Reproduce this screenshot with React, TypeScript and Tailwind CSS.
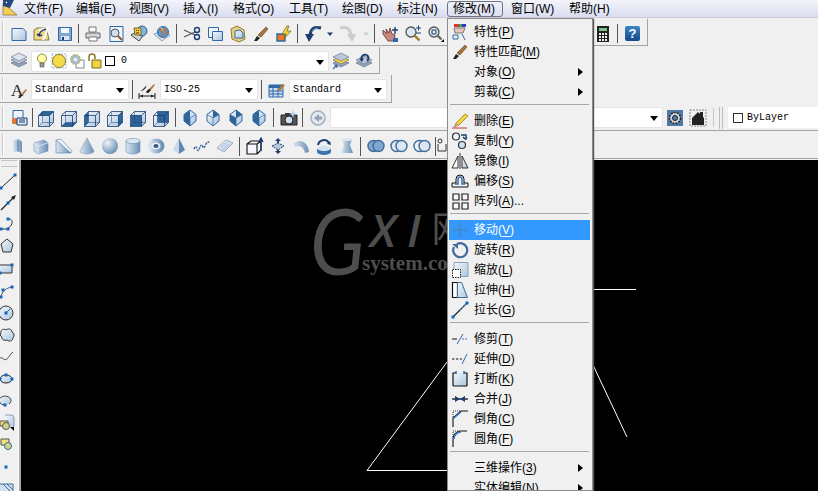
import React from "react";

const cjk = { fontFamily: '"Liberation Sans","Noto Sans CJK SC",sans-serif' };

function S({ children, w = 18, h = 18 }: { children?: React.ReactNode; w?: number; h?: number }) {
  return (
    <svg width={w} height={h} viewBox={`0 0 ${w} ${h}`} fill="none" className="shrink-0">
      {children}
    </svg>
  );
}

const B = "#2f69a8";
const D = "#1d3c70";
const L = "url(#lb)";

function Defs() {
  return (
    <svg className="absolute w-0 h-0">
      <defs>
        <linearGradient id="lb" x1="0" y1="0" x2="1" y2="1">
          <stop offset="0" stopColor="#f4f8fc" />
          <stop offset="1" stopColor="#a9c5de" />
        </linearGradient>
        <linearGradient id="sb" x1="0" y1="0" x2="1" y2="0">
          <stop offset="0" stopColor="#dbe7f2" />
          <stop offset="1" stopColor="#6c8fb3" />
        </linearGradient>
        <radialGradient id="sp" cx="0.35" cy="0.3" r="0.8">
          <stop offset="0" stopColor="#eef4fa" />
          <stop offset="1" stopColor="#5f86ae" />
        </radialGradient>
      </defs>
    </svg>
  );
}

const New = () => (
  <S>
    <path d="M2 3.5h11l3 3v9H2z" fill={L} stroke={B} />
  </S>
);
const Open = () => (
  <S>
    <path d="M1 15V5l3-2h10v3l2 9z" fill="#f0d98a" stroke="#8b7a3a" />
    <path d="M6 5l9-2-3 8-2 4" stroke="#fff" strokeWidth="2" />
    <path d="M13 4c-4 1-7 4-7 7m0 0l-2-2m2 2l3-1" stroke={D} strokeWidth="1.6" />
  </S>
);
const Save = () => (
  <S>
    <path d="M2.5 2.5h13v13h-13z" fill="#7ea6cf" stroke={B} />
    <path d="M5 3h8v5H5z" fill="#f4f8fc" />
    <path d="M5 11h8v4H5z" fill="#dbe7f2" />
    <path d="M6 12h2v3H6z" fill={D} />
  </S>
);
const Print = () => (
  <S>
    <path d="M5 2h7v5H5z" fill="#fff" stroke="#777" />
    <path d="M2 8h14v5H2z" fill="#d4d4dc" stroke="#666" />
    <path d="M5 12h8v4H5z" fill="#fff" stroke="#777" />
  </S>
);
const Preview = () => (
  <S>
    <path d="M3 1.5h13v15H3z" fill="#eef4fa" stroke={B} />
    <circle cx="8" cy="8" r="4" fill="#cfe0f0" stroke="#555" />
    <path d="M11 11l4 4" stroke="#8a5a2a" strokeWidth="2" />
  </S>
);
const Plot3d = () => (
  <S>
    <path d="M1 10l5-3 7 4-4 5z" fill="#cfd3dc" stroke="#444" />
    <circle cx="12" cy="6" r="5" fill="#7fb4e0" stroke="#3a5f8a" />
    <path d="M4 3h7v7H5z" fill="#f2c641" stroke="#7a6a20" />
    <path d="M6 5l1 1M9 5l-1 1M6 8h3" stroke="#333" />
  </S>
);
const Publish = () => (
  <S>
    <path d="M1 9l8-3 8 4-8 6z" fill="#dde6f0" stroke="#8aa0b8" />
    <circle cx="10" cy="7" r="5.5" fill="#4f9bd8" stroke="#2f69a8" />
    <path d="M6 4c3 0 4 3 3 8M13 3c-2 3-1 5 2 5" stroke="#e0662a" strokeWidth="1.5" />
    <path d="M8 2l2 4" stroke="#f2c641" />
  </S>
);
const Cut = () => (
  <S>
    <path d="M1 5l11 5M1 12l11-5" stroke="#555" strokeWidth="1.3" />
    <circle cx="14" cy="5" r="2.5" stroke={D} strokeWidth="1.4" />
    <circle cx="14" cy="12" r="2.5" stroke={D} strokeWidth="1.4" />
  </S>
);
const Copy = () => (
  <S>
    <path d="M2.5 2.5h10v10h-10z" fill="#eef4fa" stroke={B} />
    <path d="M6.5 6.5h10v9h-10z" fill={L} stroke={B} />
  </S>
);
const Paste = () => (
  <S>
    <path d="M2 4l6-3 7 4 1 9-6 3-7-3z" fill="#e8cf7a" stroke="#8b7a3a" />
    <path d="M6 6l5-1 3 3v5H6z" fill={L} stroke={B} />
  </S>
);
const Brush = () => (
  <S>
    <path d="M2 16l3-5 3 2-3 3z" fill="#222" />
    <path d="M6 10l8-8 2 2-7 8z" fill="#a8743a" stroke="#5a3c1c" strokeWidth=".6" />
  </S>
);
const Block = () => (
  <S>
    <path d="M2 9h8v7H2z" fill="#e8752a" stroke={B} strokeWidth="1.4" />
    <path d="M12 1L7 9h4l-2 5 7-8h-4l2-5z" fill="#f2d33c" stroke="#6a5a1a" strokeWidth=".7" />
  </S>
);
const Undo = ({ c = D }: { c?: string }) => (
  <S>
    <path d="M17 3C10 1 7 4 6 10" stroke={c} strokeWidth="3" />
    <path d="M1 9l9 0-5 8z" fill={c} />
    <path d="M14 3c-3 0-5 1-6 4" stroke="#6f9ac6" strokeWidth="1" />
  </S>
);
const Redo = () => (
  <S>
    <path d="M1 3c7-2 10 1 11 7" stroke="#c9cdd2" strokeWidth="3" />
    <path d="M17 9l-9 0 5 8z" fill="#c9cdd2" />
  </S>
);
const Caret = ({ c = "#1d3c70" }: { c?: string }) => (
  <S w={12} h={6}>
    <path d="M3 1.5h6L6 5z" fill={c} />
  </S>
);
const Pan = () => (
  <S>
    <path d="M2 5l4 4-1-5 3 4 1-5 2 6 3 1-1 6H7L2 9z" fill="#c58a84" stroke="#7a4a48" />
    <path d="M12 13h5v4h-5z" fill={B} />
    <path d="M14 2v7M11 5h6" stroke={D} strokeWidth="1.4" />
  </S>
);
const ZoomRt = () => (
  <S>
    <circle cx="7" cy="7" r="5" fill="#dbe7f2" stroke="#555" strokeWidth="1.3" />
    <path d="M10.5 10.5l5 5" stroke="#a07a2a" strokeWidth="2.4" />
    <path d="M12 3h5M14.5 .5v5M12 8h5" stroke={D} />
  </S>
);
const ZoomW = () => (
  <S>
    <circle cx="7" cy="7" r="5" fill="#dbe7f2" stroke="#555" strokeWidth="1.3" />
    <path d="M5 5h4v4H5z" stroke={D} />
    <path d="M10.5 10.5l4 4" stroke="#666" strokeWidth="2.4" />
    <path d="M17 14v3h-3z" fill="#000" />
  </S>
);
const Calc = () => (
  <S>
    <path d="M3 1h12v16H3z" fill="#222" />
    <path d="M5 3h8v3H5z" fill="#7fc08a" />
    <path d="M5 8h2v2H5zM8 8h2v2H8zM11 8h2v2h-2zM5 11h2v2H5zM8 11h2v2H8zM11 11h2v2h-2zM5 14h2v2H5zM8 14h2v2H8zM11 14h2v2h-2z" fill="#eee" />
  </S>
);
const Help = () => (
  <div className="w-[15px] h-[15px] rounded-[2px] bg-linear-to-b from-[#3f86c6] to-[#0f4a8a] flex items-center justify-center text-white text-[13px] font-bold" style={cjk}>
    ?
  </div>
);

const LayerStack = ({ accent }: { accent?: boolean }) => (
  <S>
    <path d="M1 11l8-4 8 4-8 4z" fill="#8fa4ba" stroke="#667" strokeWidth=".6" />
    <path d="M1 8l8-4 8 4-8 4z" fill={accent ? "#f2d33c" : "#b9c8d8"} stroke="#667" strokeWidth=".6" />
    <path d="M1 5l8-4 8 4-8 4z" fill={accent ? "#b9c8d8" : "#dde6f0"} stroke="#667" strokeWidth=".6" />
    {accent && <path d="M1 17l4-4m0 0H2m3 0v3" stroke={B} strokeWidth="1.1" />}
  </S>
);
const LayerBack = () => (
  <S>
    <path d="M1 11l8-4 8 4-8 4z" fill="#8fa4ba" stroke="#667" strokeWidth=".6" />
    <path d="M1 8l8-4 8 4-8 4z" fill="#b9c8d8" stroke="#667" strokeWidth=".6" />
    <path d="M7 8a3.5 3.5 0 1 1 5 1" stroke={D} strokeWidth="2" />
    <path d="M4 7l5-1-2 4z" fill={D} />
  </S>
);
const Bulb = () => (
  <S w={14} h={16}>
    <circle cx="7" cy="5.5" r="4.5" fill="#ffffa8" stroke="#8a8a30" />
    <path d="M5 10h4v4H5z" fill="#999" stroke="#555" strokeWidth=".6" />
  </S>
);
const Sun = () => (
  <S w={16} h={16}>
    <rect x="1" y="1" width="14" height="14" stroke="#9fb8d0" strokeDasharray="2 1" />
    <circle cx="8" cy="8" r="6.5" fill="#f5dc4a" stroke="#8a7a20" />
  </S>
);
const Freeze = () => (
  <S w={16} h={16}>
    <rect x="7" y="7" width="8" height="8" fill="#fff" stroke="#7a8a9a" />
    <circle cx="6.5" cy="6.5" r="5" fill="#a5bccf" stroke="#d0b040" strokeDasharray="2 1" />
    <circle cx="6.5" cy="6.5" r="2" fill="#e8eef4" />
  </S>
);
const Lock = () => (
  <S w={16} h={16}>
    <path d="M2 8V4a3 3 0 0 1 6 0v2" stroke="#8a7a20" strokeWidth="1.5" />
    <path d="M5 7h9v8H5z" fill="#f2d33c" stroke="#7a6a20" />
  </S>
);
const Square = () => <div className="w-[10px] h-[10px] border border-black bg-white" />;

const TextStyle = () => (
  <S>
    <text x="1" y="15" fontSize="17" fontFamily="Liberation Serif" fill="#222">A</text>
    <path d="M8 17l3-4 2 1-3 3z" fill="#222" />
    <path d="M11 13l5-5 1 1-4 5z" fill="#b27a3c" />
  </S>
);
const DimStyle = () => (
  <S w={18} h={18}>
    <path d="M1 15h16M1 12v6M17 12v6" stroke="#222" />
    <path d="M2 15l3-1.5v3zM16 15l-3-1.5v3z" fill="#222" />
    <path d="M3 10c3-1 5-3 5-5M8 11l3-3 2 1-3 3z" fill="#222" stroke="#222" strokeWidth=".5" />
    <path d="M11 8l5-5 1 1-4 5z" fill="#b27a3c" />
  </S>
);
const TableStyle = () => (
  <S>
    <path d="M1 4h14v12H1z" fill="#cfe0f0" stroke={B} />
    <path d="M1 4h14v3H1z" fill={B} />
    <path d="M1 10h14M1 13h14M5 7v9M10 7v9" stroke={B} />
    <path d="M9 9l6-6 2 1-5 6z" fill="#b27a3c" />
  </S>
);

const PageSetup = () => (
  <S>
    <path d="M3 1.5h10v13H3z" fill="#eef4fa" stroke={B} />
    <circle cx="5" cy="12" r="3" fill="#e8752a" />
    <path d="M7 9h10v7H7z" fill="#dbe7f2" stroke={D} />
    <path d="M9 11h6M9 13h6" stroke={D} />
  </S>
);

function Cube({ face }: { face: "top" | "bottom" | "left" | "right" | "front" | "back" }) {
  const dark = "#2f6499";
  return (
    <S>
      <path d="M1.5 6.5l4-4h11v11l-4 4h-11z" fill={L} stroke={D} strokeWidth=".8" />
      {face === "top" && <path d="M1.5 6.5l4-4h11l-4 4z" fill={dark} />}
      {face === "bottom" && <path d="M1.5 17.5l4-4h11l-4 4z" fill={dark} />}
      {face === "left" && <path d="M1.5 6.5l4-4v11l-4 4z" fill={dark} />}
      {face === "right" && <path d="M12.5 6.5l4-4v11l-4 4z" fill={dark} />}
      {face === "front" && <path d="M1.5 6.5h11v11h-11z" fill={dark} />}
      {face === "back" && <path d="M5.5 2.5h11v11h-11z" fill={dark} />}
      <path d="M1.5 6.5h11v11M12.5 6.5l4-4" stroke={D} strokeWidth=".8" />
      <path d="M5.5 2.5v11h11M5.5 13.5l-4 4" stroke={D} strokeWidth=".5" />
    </S>
  );
}
function Iso({ k }: { k: number }) {
  const dark = "#2f6499";
  const faces = ["M9 9L3 5.5V12l6 5z", "M9 9l6-3.5V12l-6 5z", "M9 9L3 5.5 9 1z", "M9 9l6-3.5L9 1z"];
  const sel = [[2, 0], [3], [0, 3], [0, 2]][k];
  return (
    <S>
      <path d="M9 1l6 4.5V12l-6 5-6-5V5.5z" fill={L} stroke={B} />
      {sel.map((i) => (
        <path key={i} d={faces[i]} fill={dark} />
      ))}
      <path d="M3 5.5L9 9l6-3.5M9 9v8" stroke={B} strokeWidth=".7" />
    </S>
  );
}
const Camera = () => (
  <S>
    <path d="M1 6h16v10H1z" fill="#555" stroke="#222" />
    <circle cx="9" cy="11" r="4" fill="#cfe0f0" stroke="#222" />
    <path d="M5 4h6v2H5z" fill="#333" />
    <path d="M13 1l1 3 3 1-3 1-1 3-1-3-3-1 3-1z" fill="#a8cff0" />
  </S>
);
const BackCircle = () => (
  <S>
    <circle cx="9" cy="9" r="7" fill="#e4e8ee" stroke="#9fb0c2" strokeWidth="1.5" />
    <path d="M5 9l5-4v2.5h3v3h-3V13z" fill="#8fa2b6" />
  </S>
);
const Gear = () => (
  <S>
    <rect x="1" y="1" width="16" height="16" fill="#4f7aa8" />
    <circle cx="9" cy="9" r="5.5" fill="#cfd5dc" stroke="#222" strokeDasharray="2 1" strokeWidth="1.5" />
    <circle cx="9" cy="9" r="2.5" fill="#4f7aa8" stroke="#222" />
  </S>
);
const House = () => (
  <S>
    <rect x="1" y="1" width="16" height="16" stroke="#8a8a8a" strokeDasharray="2 1" />
    <path d="M3 9l6-6 2 2V3h3v5l1 1v7H3z" fill="#222" />
  </S>
);

const Box = () => (
  <S>
    <path d="M2 6l10-3 4 3v8l-10 3-4-3z" fill="url(#sb)" stroke="#6c8fb3" strokeWidth=".6" />
    <path d="M2 6l4 3 10-3M6 9v8" stroke="#eef4fa" strokeWidth=".7" />
  </S>
);
const Poly = () => (
  <S>
    <path d="M4 3l6-1 3 3v11l-4-2-5 1z" fill="url(#sb)" />
    <path d="M9 4v11" stroke="#5a7fa5" />
  </S>
);
const Wedge = () => (
  <S>
    <path d="M1 3v13h15z" fill="url(#sb)" stroke="#5a7fa5" strokeWidth=".6" />
    <path d="M1 3l5-1 11 12-1 2z" fill="#eef4fa" stroke="#5a7fa5" strokeWidth=".6" />
  </S>
);
const Cone = () => (
  <S>
    <path d="M9 1l7 13a7 3 0 0 1-14 0z" fill="url(#sb)" stroke="#7a93ad" strokeWidth=".5" />
  </S>
);
const Sphere = () => (
  <S>
    <circle cx="9" cy="9" r="8" fill="url(#sp)" />
  </S>
);
const Cyl = () => (
  <S>
    <path d="M2 4v10a7 3 0 0 0 14 0V4z" fill="url(#sb)" stroke="#6c8fb3" strokeWidth=".6" />
    <ellipse cx="9" cy="4" rx="7" ry="2.6" fill="#dbe7f2" stroke="#6c8fb3" strokeWidth=".6" />
  </S>
);
const Torus = () => (
  <S>
    <ellipse cx="9" cy="9" rx="6.5" ry="5.5" stroke="url(#sb)" strokeWidth="4" />
    <ellipse cx="9" cy="9" rx="2.6" ry="2" fill="#2f5f90" />
  </S>
);
const Pyramid = () => (
  <S>
    <path d="M9 1L3 13l6 4z" fill="#c6d8ea" />
    <path d="M9 1l6 12-6 4z" fill="#5f86ae" />
  </S>
);
const Helix = () => (
  <S>
    <path d="M1 12c1-3 2-3 3 0s2 1 3-2 2-2 3 0 2-1 3-3 2-2 4-2" stroke="#2f5f90" strokeWidth="1.4" strokeDasharray="2 1" />
  </S>
);
const Plane = () => (
  <S>
    <path d="M1 11l9-8 7 3-9 9z" fill="url(#lb)" stroke="#9fb0c2" />
    <path d="M5 10l6-5M7 12l6-5" stroke="#9fb0c2" strokeWidth=".7" />
  </S>
);
const Extrude = () => (
  <S>
    <path d="M1 7h10v10H1zM1 7l4-3h10v9l-4 4M11 7l4-3" fill="#f4f8fc" stroke="#111" strokeWidth="1.1" />
    <path d="M15 14V2m-2 3l2-4 2 4" stroke={D} strokeWidth="1.3" />
  </S>
);
const PressPull = () => (
  <S>
    <path d="M9 1l3 3h-2v2H8V4H6zM9 17l3-3h-2v-2H8v2H6z" fill={D} />
    <path d="M3 9l6-3 6 3-6 4z" fill="#b9c8d8" stroke={D} strokeDasharray="2 1" />
  </S>
);
const Sweep = () => (
  <S>
    <path d="M1 6l6-2c6 0 9 4 10 11l-4 1c-1-4-3-7-7-7l-3 1z" fill="url(#sb)" />
  </S>
);
const Revolve = () => (
  <S>
    <path d="M2 11a7 3 0 0 0 14 0v4a7 3 0 0 1-14 0z" fill="#3f75ad" />
    <path d="M3 8a6 6 0 0 1 11-2" stroke={D} strokeWidth="2" />
    <path d="M16 8l-4-1 3-3z" fill={D} />
    <ellipse cx="9" cy="11" rx="6" ry="2" fill="#cfe0f0" />
  </S>
);
const Loft = () => (
  <S>
    <path d="M4 2h10l-2 6 3 8H3l3-8z" fill="url(#sb)" />
    <ellipse cx="9" cy="2.5" rx="5" ry="1.5" fill="#dbe7f2" />
  </S>
);
function Boolean({ k }: { k: number }) {
  return (
    <S>
      <circle cx="6.5" cy="9" r="5.5" fill={k === 0 ? "#7ea6cf" : k === 1 ? "#dbe7f2" : "#eef4fa"} stroke="#3f6c9a" strokeWidth="1.4" />
      <circle cx="11.5" cy="9" r="5.5" fill={k === 0 ? "#7ea6cf" : "#dbe7f2"} stroke="#3f6c9a" strokeWidth="1.4" />
    </S>
  );
}
const Solid = () => (
  <S>
    <circle cx="3" cy="4" r="2" stroke="#333" />
    <path d="M1 7v7h8V7" stroke="#333" />
  </S>
);

function Pt({ x, y }: { x: number; y: number }) {
  return <rect x={x - 1.5} y={y - 1.5} width="3" height="3" fill="#1566c0" />;
}

const ToolIcons = [
  <S key="0"><path d="M1 16L15 3" stroke="#222" /><Pt x={1} y={16} /><Pt x={15} y={3} /></S>,
  <S key="1"><path d="M1 16L13 4" stroke="#222" strokeWidth="1.2" /><path d="M16 1l-5 2 3 3z" fill="#222" /><Pt x={8} y={9} /></S>,
  <S key="2"><path d="M1 13h7M8 3c5-1 6 6 0 9" stroke="#333" /><Pt x={1} y={13} /><Pt x={8} y={13} /><Pt x={8} y={3} /></S>,
  <S key="3"><path d="M7 1l6 5-2 8H3L1 6z" fill={L} stroke="#333" /></S>,
  <S key="4"><path d="M-4 5h16v8H-4z" fill={L} stroke="#333" /><Pt x={12} y={5} /><Pt x={0} y={13} /></S>,
  <S key="5"><path d="M1 15c1-6 5-9 11-10" stroke="#555" /><Pt x={1} y={15} /><Pt x={3} y={8} /><Pt x={12} y={5} /></S>,
  <S key="6"><circle cx="6" cy="9" r="7" fill={L} stroke="#333" /><path d="M6 9l4-4" stroke={B} /><Pt x={6} y={9} /></S>,
  <S key="7"><path d="M1 7c-1-3 3-5 5-3 2-2 6-1 6 2 3 1 2 5 1 6 0 3-4 4-6 2-3 1-6-1-5-3-2-1-2-3-1-4z" fill={L} stroke="#333" /></S>,
  <S key="8"><path d="M-1 11c3-4 5 3 8 0s3-5 6-7" stroke="#555" /></S>,
  <S key="9"><ellipse cx="6" cy="9" rx="6" ry="4" fill={L} stroke="#222" /><Pt x={6} y={5} /><Pt x={12} y={9} /><Pt x={0} y={9} /></S>,
  <S key="10"><path d="M4 13a6 4.5 0 1 1 5-1" fill={L} stroke="#444" /><Pt x={5} y={13} /></S>,
  <S key="11"><path d="M5 1h6a3 3 0 0 1 3 3v7a3 3 0 0 1-3 3" fill={L} stroke="#8aa0b8" /><path d="M0 7h8v5H0z" fill="#f2e27a" stroke="#555" /><circle cx="6" cy="12" r="3.5" fill="#cfd58a" stroke="#555" /><path d="M14 17v-4h-4z" fill="#000" /></S>,
  <S key="12"><path d="M1 3h8v6H1z" fill="#f2e27a" stroke="#555" /><circle cx="8" cy="10" r="3.5" fill="#cfd58a" stroke="#3f6c9a" /></S>,
  <S key="13"><Pt x={6} y={9} /></S>,
  <S key="14"><path d="M-1 4h14v14H-1z" fill="#cfe0f0" stroke="#3f6c9a" /><path d="M-1 10l8 8M3 4l10 10M7 4l6 6M-1 14l4 4" stroke="#3f6c9a" /></S>,
];

function Slot({ children, className = "" }: { children?: React.ReactNode; className?: string }) {
  return <div className={`w-[23px] h-[22px] shrink-0 flex items-center justify-center ${className}`}>{children}</div>;
}
function Sep({ className = "" }: { className?: string }) {
  return <div className={`w-px h-[19px] shrink-0 bg-[#555] ${className}`} />;
}
function Combo({ className, text, children }: { className: string; text?: string; children?: React.ReactNode }) {
  return (
    <div className={`h-[21px] shrink-0 bg-white rounded-[2px] border border-[#e4e4e4] flex items-center relative ${className}`}>
      {children}
      {text && <span className="pl-[3px] text-[10px] leading-none text-black" style={{ fontFamily: '"Liberation Mono",monospace' }}>{text}</span>}
      <svg width="8" height="5" className="absolute right-[4px] top-[8px]"><path d="M0 0h8L4 5z" fill="#000" /></svg>
    </div>
  );
}
function Row({ className, children }: { className: string; children: React.ReactNode }) {
  return (
    <div className={`flex items-center pl-[7px] border-b border-[#a3a3a3] relative ${className}`}>
      <div className="absolute left-[2px] top-[2px] bottom-[2px] w-[2px] border-x border-x-[#c8c8c8] border-r-white" />
      {children}
    </div>
  );
}

type MI = { icon?: React.ReactNode; t: string; k: string; tail?: string; sub?: boolean; on?: boolean } | "sep";

const menuItems: MI[] = [
  { t: "特性", k: "P", icon: <S><path d="M3 1h12v3H3z" fill="#d33" /><path d="M8 1h3v3H8z" fill="#3a3" /><path d="M11 1h4v3h-4z" fill="#33d" /><path d="M3 5h11l-2 5H4z" fill="#e7c9c0" stroke="#777" /><path d="M2 12h5v4H2zM11 11l3 6" stroke="#2f69a8" /></S> },
  { t: "特性匹配", k: "M", icon: <Brush /> },
  { t: "对象", k: "O", sub: true },
  { t: "剪裁", k: "C", sub: true },
  "sep",
  { t: "删除", k: "E", icon: <S><path d="M1 16h15" stroke="#c33" /><path d="M3 15l2-4 9-9 3 2-9 9z" fill="#f2d33c" stroke="#8a7a20" strokeWidth=".7" /><path d="M3 15l2-4 3 2z" fill="#c98" /></S> },
  { t: "复制", k: "Y", icon: <S><circle cx="5" cy="4.5" r="3.5" fill="#eef4fa" stroke="#333" strokeWidth="1.2" /><circle cx="11" cy="13" r="3.5" fill="#cfe0f0" stroke="#333" strokeWidth="1.2" /><path d="M10 3h5v5m-1-1l2-2m-2 2l-2-2" stroke={D} strokeWidth="1.4" /></S> },
  { t: "镜像", k: "I", icon: <S><path d="M9 1v16" stroke="#333" /><path d="M7 4v12H1z" fill="#fff" stroke="#333" /><path d="M11 4v12h6z" fill={L} stroke="#333" /></S> },
  { t: "偏移", k: "S", icon: <S><path d="M1 15v-4h4V7a4 4 0 0 1 8 0v4h4v4z" stroke="#111" /><path d="M4 12h3V7a2 2 0 0 1 4 0v5h3" stroke={B} strokeWidth="1.4" /></S> },
  { t: "阵列", k: "A", tail: "...", icon: <S><path d="M2 2h6v6H2zM11 2h6v6h-6zM2 11h6v6H2zM11 11h6v6h-6z" fill="#f8f8f8" stroke="#222" strokeWidth="1.2" /></S> },
  "sep",
  { t: "移动", k: "V", on: true, icon: <S><path d="M9 1l3 3h-2v4h4V6l3 3-3 3v-2h-4v4h2l-3 3-3-3h2v-4H4v2L1 9l3-3v2h4V4H6z" fill="#4c86bf" /></S> },
  { t: "旋转", k: "R", icon: <S><path d="M6 3a7 7 0 1 1-3 3" stroke="#3f6c9a" strokeWidth="2.2" /><path d="M1 3h6v5z" fill="#3f6c9a" /></S> },
  { t: "缩放", k: "L", icon: <S><path d="M3 1.5h14v14H3z" fill={L} stroke="#8aa0b8" /><path d="M1.5 8.5h8v8h-8z" fill="#fff" stroke="#222" strokeDasharray="1.5 1" /></S> },
  { t: "拉伸", k: "H", icon: <S><path d="M1.5 1.5h5v15h-5z" fill="#fff" stroke="#111" strokeWidth="1.2" /><path d="M6.5 1.5h4l6 15h-10z" fill={L} stroke="#3f6c9a" /></S> },
  { t: "拉长", k: "G", icon: <S><path d="M2 16L16 2" stroke="#222" strokeWidth="1.2" /><path d="M9 9l6-6" stroke="#5f9ad0" strokeDasharray="1.5 1" strokeWidth="1.2" /><Pt x={2} y={16} /><Pt x={16} y={2} /></S> },
  "sep",
  { t: "修剪", k: "T", icon: <S><path d="M1 9h5" stroke="#111" /><path d="M11 9h5" stroke="#2f7ad0" strokeDasharray="2 1" /><path d="M6 14L12 4" stroke="#2f69a8" /></S> },
  { t: "延伸", k: "D", icon: <S><path d="M1 9h10" stroke="#111" strokeDasharray="2.5 1.5" /><path d="M11 14L16 4" stroke="#2f69a8" /></S> },
  { t: "打断", k: "K", icon: <S><path d="M2 3h14v13H2z" fill={L} /><path d="M2 16V3h3M16 16V3h-3M2 16h14" stroke="#111" strokeWidth="1.2" /><path d="M5 1v3M13 1v3" stroke={B} strokeWidth="1.5" /></S> },
  { t: "合并", k: "J", icon: <S><path d="M1 9h16" stroke="#222" strokeWidth="1.4" /><path d="M4 6l5 3-5 3zM14 6L9 9l5 3z" fill={D} /></S> },
  { t: "倒角", k: "C", icon: <S><path d="M2 17V8l8-7h7" stroke="#111" strokeWidth="1.1" /><path d="M2 7V1h7" stroke="#333" strokeDasharray="1 1" /><path d="M3 8l7-6" stroke="#2f7ad0" strokeWidth="1.2" /></S> },
  { t: "圆角", k: "F", icon: <S><path d="M2 17V9c0-4 3-8 8-8h6" stroke="#111" strokeWidth="1.1" /><path d="M2 7V1h7" stroke="#333" strokeDasharray="1 1" /><path d="M3 9c0-3 3-7 7-7" stroke="#2f7ad0" strokeWidth="1.4" /></S> },
  "sep",
  { t: "三维操作", k: "3", sub: true },
  { t: "实体编辑", k: "N", sub: true },
];

function ModifyMenu() {
  return (
    <div className="absolute left-[447px] top-[18px] w-[146px] h-[473px] overflow-hidden bg-[#f0f0f0] border border-[#8c8c8c] shadow-[1px_1px_1px_#555] pl-px pr-[2px] pt-[3px]" style={cjk}>
      {menuItems.map((m, i) =>
        m === "sep" ? (
          <div key={i} className="h-[9px] pt-[2px] px-px">
            <div className="h-px bg-[#a6a6a6]" />
          </div>
        ) : (
          <div key={i} className={`h-[20px] flex items-center text-[12px] leading-none ${m.on ? "bg-[#3399ff] text-white" : "text-black"}`}>
            <div className={`w-[22px] h-[20px] flex items-center justify-center shrink-0 ${m.on ? "opacity-70" : ""}`}>{m.icon}</div>
            <span className="ml-[3px] whitespace-nowrap">
              {m.t}(<span className="underline underline-offset-2">{m.k}</span>){m.tail}
            </span>
            {m.sub && (
              <svg width="5" height="8" className="ml-auto mr-[7px]"><path d="M0 0l5 4-5 4z" fill="#000" /></svg>
            )}
          </div>
        )
      )}
    </div>
  );
}

const topMenus: [string, string, string][] = [
  ["文件", "F", "w-[52px]"],
  ["编辑", "E", "w-[53px]"],
  ["视图", "V", "w-[54px]"],
  ["插入", "I", "w-[50px]"],
  ["格式", "O", "w-[56px]"],
  ["工具", "T", "w-[53px]"],
  ["绘图", "D", "w-[55px]"],
  ["标注", "N", "w-[56px]"],
  ["修改", "M", "w-[58px]"],
  ["窗口", "W", "w-[58px]"],
  ["帮助", "H", "w-[58px]"],
];

export default function App() {
  return (
    <div className="relative w-[818px] h-[491px] overflow-hidden bg-[#f0f0f0] flex flex-col" style={cjk}>
      <Defs />
      {/* menu bar */}
      <div className="h-[18px] shrink-0 flex items-center pl-[24px] bg-linear-to-b from-[#f3f4fa] to-[#d9ddf0] border-b border-[#c9ccd8] relative text-[12px] text-black">
        <div className="absolute left-[2px] top-0">
          <S h={16}>
            <path d="M1 15V3l14 12z" fill="#f4cf5a" stroke="#8a6a20" strokeWidth=".7" />
            <path d="M1 0h11L8 8 1 6z" fill="#24477c" />
            <path d="M4 2l1 1" stroke="#fff" strokeWidth="1.5" />
          </S>
        </div>
        <div className="absolute left-[447px] top-[1px] w-[56px] h-[16px] rounded-[3px] border border-[#6f7484]" />
        {topMenus.map(([a, b, w]) => (
          <div key={b} className={`${w} shrink-0 whitespace-nowrap leading-none relative`}>{a}({b})</div>
        ))}
      </div>
      <div className="h-px shrink-0" />

      {/* toolbar 1 */}
      <Row className="w-[648px] h-[27px] pt-[3px] mb-px border-r shrink-0">
        <Slot><New /></Slot><Slot><Open /></Slot><Slot><Save /></Slot>
        <Sep className="ml-[2px]" />
        <Slot className="ml-[2px]"><Print /></Slot><Slot><Preview /></Slot><Slot><Plot3d /></Slot><Slot><Publish /></Slot>
        <Sep className="ml-[3px]" />
        <Slot className="ml-[3px]"><Cut /></Slot><Slot><Copy /></Slot><Slot><Paste /></Slot><Slot><Brush /></Slot><Slot><Block /></Slot>
        <Sep className="ml-[2px]" />
        <Slot className="ml-[3px]"><Undo /></Slot>
        <div className="w-[12px] flex justify-center shrink-0"><Caret /></div>
        <Slot><Redo /></Slot>
        <div className="w-[14px] flex justify-center shrink-0"><Caret c="#c9cdd2" /></div>
        <Sep className="ml-px" />
        <Slot className="ml-[3px]"><Pan /></Slot><Slot><ZoomRt /></Slot><Slot><ZoomW /></Slot>
        <Slot className="ml-[144px]"><Calc /></Slot>
        <Sep className="ml-[3px]" />
        <Slot className="ml-[3px]"><Help /></Slot>
      </Row>

      {/* toolbar 2 */}
      <Row className="w-[380px] h-[27px] pt-[2px] mb-px border-r shrink-0">
        <Slot><LayerStack /></Slot>
        <Combo className="ml-px w-[298px]">
          <div className="flex items-center pl-[3px] gap-[2px]">
            <Bulb /><Sun /><Freeze /><Lock /><Square />
            <span className="ml-[4px] text-[10px] leading-none" style={{ fontFamily: '"Liberation Mono",monospace' }}>0</span>
          </div>
        </Combo>
        <Slot><LayerStack accent /></Slot><Slot><LayerBack /></Slot>
      </Row>

      {/* toolbar 3 */}
      <Row className="w-[392px] h-[28px] pt-[2px] mb-px border-r shrink-0">
        <Slot><TextStyle /></Slot>
        <Combo className="ml-px w-[98px]" text="Standard" />
        <Sep className="ml-[3px]" />
        <Slot className="ml-[2px]"><DimStyle /></Slot>
        <Combo className="ml-[2px] w-[98px]" text="ISO-25" />
        <Sep className="ml-[3px]" />
        <Slot className="ml-[3px]"><TableStyle /></Slot>
        <Combo className="ml-px w-[98px]" text="Standard" />
      </Row>

      {/* toolbar 4 */}
      <Row className="w-full h-[27px] pt-px mb-px shrink-0">
        <Slot><PageSetup /></Slot>
        <Sep className="ml-[2px]" />
        <Slot className="ml-px"><Cube face="top" /></Slot><Slot><Cube face="bottom" /></Slot><Slot><Cube face="left" /></Slot>
        <Slot><Cube face="right" /></Slot><Slot><Cube face="front" /></Slot><Slot><Cube face="back" /></Slot>
        <Sep className="ml-[3px]" />
        <Slot className="ml-[2px]"><Iso k={0} /></Slot><Slot><Iso k={1} /></Slot><Slot><Iso k={2} /></Slot><Slot><Iso k={3} /></Slot>
        <Sep className="ml-[3px]" />
        <Slot className="ml-[3px]"><Camera /></Slot>
        <Sep className="ml-[2px]" />
        <Slot className="ml-[3px]"><BackCircle /></Slot>
        <Combo className="ml-px w-[333px]" />
        <Slot><Gear /></Slot><Slot><House /></Slot>
        <Sep className="ml-[4px] bg-[#c8c8c8]" />
        <div className="ml-[5px] w-[4px] h-[22px] border-x border-[#bdbdbd] shrink-0" />
        <div className="ml-[5px] flex-1 h-[21px] bg-white flex items-center pl-[5px]">
          <div className="w-[10px] h-[10px] border border-[#333]" />
          <span className="ml-[4px] text-[10px] leading-none" style={{ fontFamily: '"Liberation Mono",monospace' }}>ByLayer</span>
        </div>
      </Row>

      {/* toolbar 5 */}
      <Row className="w-full h-[27px] pt-[2px] mb-px shrink-0 !pl-[6px]">
        <Slot><Poly /></Slot><Slot><Box /></Slot><Slot><Wedge /></Slot><Slot><Cone /></Slot><Slot><Sphere /></Slot>
        <Slot><Cyl /></Slot><Slot><Torus /></Slot><Slot><Pyramid /></Slot><Slot><Helix /></Slot><Slot><Plane /></Slot>
        <Sep className="ml-[3px]" />
        <Slot className="ml-[3px]"><Extrude /></Slot><Slot><PressPull /></Slot><Slot><Sweep /></Slot><Slot><Revolve /></Slot><Slot><Loft /></Slot>
        <Sep className="ml-[2px]" />
        <Slot className="ml-[3px]"><Boolean k={0} /></Slot><Slot><Boolean k={1} /></Slot><Slot><Boolean k={2} /></Slot>
        <Sep className="ml-[2px]" />
        <Slot className="-ml-[2px]"><Solid /></Slot>
      </Row>

      {/* work area */}
      <div className="flex-1 flex min-h-0">
        <div className="w-[19px] shrink-0 flex flex-col overflow-hidden border-r border-white">
          <div className="h-[7px] mx-[1px] shrink-0 border-y border-[#c4c4c4] mb-[3px]" />
          {ToolIcons.map((ic, i) => (
            <div key={i} className="h-[22px] w-[18px] shrink-0 flex items-center overflow-hidden">
              {ic}
            </div>
          ))}
        </div>
        <div className="w-[2px] shrink-0 bg-[#a8a8a8]" />
        <div className="flex-1 relative bg-black overflow-hidden">
          <div className="absolute left-[289px] top-[34px] origin-left scale-x-[0.88] text-[#4d4d4d] leading-none text-[92px] italic" style={{ fontFamily: '"Lato","Liberation Sans",sans-serif' }}>G</div>
          <div className="absolute left-[349px] top-[46px] flex items-center gap-[11px] text-[#4d4d4d] italic font-semibold text-[46px] leading-none whitespace-nowrap" style={{ fontFamily: '"Open Sans","Noto Sans CJK SC",sans-serif' }}>
            <span>X</span><span>I</span><span className="not-italic font-normal text-[36px]">网</span>
          </div>
          <div className="absolute left-[341px] top-[93px] text-[#4d4d4d] font-bold text-[21px] leading-none whitespace-nowrap" style={{ fontFamily: '"Liberation Serif",serif' }}>system.com</div>
          <svg className="absolute left-0 top-0" width="797" height="331">
            <g stroke="#fff" strokeWidth="1" fill="none">
              <path d="M572 129.5h43" />
              <path d="M426 202L346 310.5h80" />
              <path d="M572 205l34 72" />
            </g>
          </svg>
        </div>
      </div>

      <ModifyMenu />
    </div>
  );
}
